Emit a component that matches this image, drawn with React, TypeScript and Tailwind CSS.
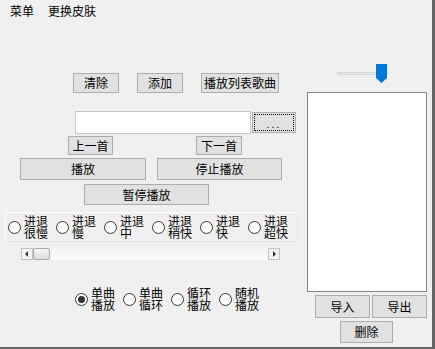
import React from "react";

const font = { fontFamily: '"Noto Sans CJK SC", "Liberation Sans", sans-serif' };

function Btn({ label, className = "" }: { label: string; className?: string }) {
  return (
    <div
      className={`flex items-center justify-center bg-[#e1e1e1] border border-[#adadad] text-[12px] leading-none text-black ${className}`}
    >
      {label}
    </div>
  );
}

function Radio({ label, checked = false }: { label: string; checked?: boolean }) {
  return (
    <div className="flex items-center w-[48px] shrink-0">
      <span className="w-[13px] h-[13px] rounded-full border border-[#333] bg-white flex items-center justify-center shrink-0">
        {checked && <span className="w-[7px] h-[7px] rounded-full bg-[#333]" />}
      </span>
      <span className="ml-[3px] w-[24px] text-[12px] leading-[12px] text-black break-all">{label}</span>
    </div>
  );
}

export default function App() {
  const speeds = ["进退很慢", "进退慢", "进退中", "进退稍快", "进退快", "进退超快"];
  const modes = ["单曲播放", "单曲循环", "循环播放", "随机播放"];

  return (
    <div
      style={font}
      className="w-[435px] h-[349px] bg-[#f0f0f0] border-r-[3px] border-b-[2px] border-[#646464] overflow-hidden flex flex-col"
    >
      {/* Menu strip */}
      <div className="h-[22px] flex items-center text-[12px] text-black shrink-0">
        <span className="ml-[10px]">菜单</span>
        <span className="ml-[14px]">更换皮肤</span>
      </div>

      <div className="flex flex-1">
        {/* Left side */}
        <div className="w-[300px] flex flex-col shrink-0">
          <div className="flex mt-[51px] ml-[73px] gap-[18px]">
            <Btn label="清除" className="w-[46px] h-[20px]" />
            <Btn label="添加" className="w-[46px] h-[20px]" />
            <Btn label="播放列表歌曲" className="w-[78px] h-[20px]" />
          </div>

          <div className="flex items-center mt-[18px] ml-[75px]">
            <div className="w-[176px] h-[23px] bg-white border border-[#c8c8c8]" />
            <div className="ml-[1px] w-[44px] h-[21px] bg-[#e1e1e1] border border-[#adadad] p-[1px]">
              <div className="w-full h-full border border-dotted border-black flex items-end justify-center text-[10px] leading-[12px] tracking-[2px]">
                ...
              </div>
            </div>
          </div>

          <div className="flex mt-[2px] ml-[68px]">
            <Btn label="上一首" className="w-[45px] h-[19px]" />
            <Btn label="下一首" className="w-[46px] h-[19px] ml-[83px]" />
          </div>

          <div className="flex mt-[3px] ml-[20px]">
            <Btn label="播放" className="w-[126px] h-[22px]" />
            <Btn label="停止播放" className="w-[125px] h-[22px] ml-[11px]" />
          </div>

          <div className="flex mt-[4px] ml-[84px]">
            <Btn label="暂停播放" className="w-[125px] h-[21px]" />
          </div>

          <div className="mt-[7px] ml-[5px] w-[293px] h-[30px] border border-[#e3e3e3] border-l-white border-t-white flex items-center pl-[2px]">
            {speeds.map((s) => (
              <Radio key={s} label={s} />
            ))}
          </div>

          {/* Horizontal scrollbar */}
          <div className="mt-[6px] ml-[21px] w-[259px] h-[12px] flex bg-gradient-to-b from-[#f3f3f3] to-[#fcfcfc]">
            <div className="w-[12px] h-[12px] border border-[#c2c2c2] bg-[#f4f4f4] flex items-center justify-center">
              <svg width="4" height="6" viewBox="0 0 4 6">
                <path d="M3 0 L0 3 L3 6 Z" fill="#333" />
              </svg>
            </div>
            <div className="w-[17px] h-[12px] border border-[#a9a9a9] rounded-[2px] bg-gradient-to-b from-[#f5f5f5] to-[#dedede]" />
            <div className="flex-1" />
            <div className="w-[12px] h-[12px] border border-[#c2c2c2] bg-[#f4f4f4] flex items-center justify-center">
              <svg width="4" height="6" viewBox="0 0 4 6">
                <path d="M1 0 L4 3 L1 6 Z" fill="#333" />
              </svg>
            </div>
          </div>

          <div className="flex mt-[27px] ml-[75px]">
            {modes.map((m, i) => (
              <Radio key={m} label={m} checked={i === 0} />
            ))}
          </div>
        </div>

        {/* Right side */}
        <div className="flex flex-col">
          <div className="mt-[42px] ml-[37px] flex items-center h-[19px]">
            <div className="w-[40px] h-[3px] bg-[#e7e7e7] border border-[#d6d6d6]" />
            <svg width="11" height="19" viewBox="0 0 11 19" className="-ml-[1px]">
              <path d="M0 0 H11 V14 L5.5 19 L0 14 Z" fill="#0078d7" />
            </svg>
          </div>

          <div className="mt-[9px] ml-[7px] w-[120px] h-[200px] bg-white border border-[#828790]" />

          <div className="flex mt-[3px] ml-[15px] gap-[2px]">
            <Btn label="导入" className="w-[55px] h-[23px]" />
            <Btn label="导出" className="w-[55px] h-[23px]" />
          </div>
          <div className="flex mt-[3px] ml-[40px]">
            <Btn label="删除" className="w-[53px] h-[22px]" />
          </div>
        </div>
      </div>
    </div>
  );
}
